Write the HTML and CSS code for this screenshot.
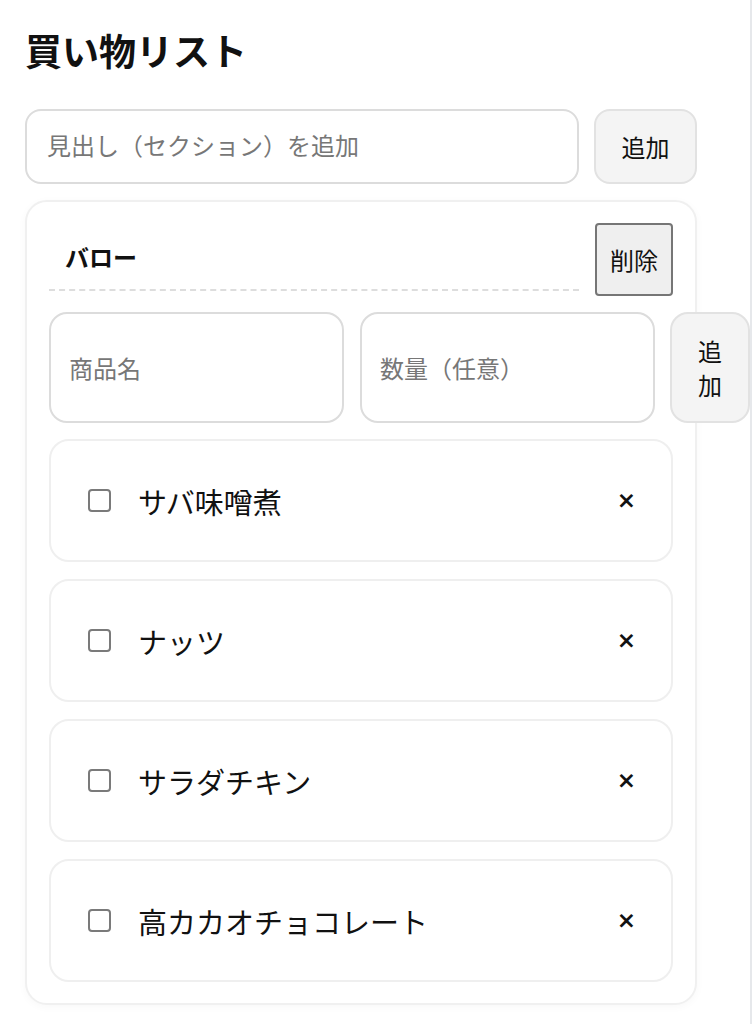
FILE: index.html
```html
<!DOCTYPE html>
<html lang="ja">
<head>
<meta charset="utf-8">
<title>買い物リスト</title>
<link rel="stylesheet" href="styles.css">
</head>
<body>
<div class="page">
  <h1 class="title">買い物リスト</h1>
  <div class="section-form">
    <input class="text-input section-input" type="text" placeholder="見出し（セクション）を追加">
    <button class="soft-btn section-add">追加</button>
  </div>
  <div class="card">
    <div class="card-head">
      <div class="card-label">バロー</div>
      <button class="del-btn">削除</button>
    </div>
    <div class="item-form">
      <input class="text-input item-input" type="text" placeholder="商品名">
      <input class="text-input item-input" type="text" placeholder="数量（任意）">
      <button class="soft-btn item-add">追加</button>
    </div>
    <ul class="items">
      <li class="item"><input class="check" type="checkbox"><span class="item-name">サバ味噌煮</span><button class="remove">×</button></li>
      <li class="item"><input class="check" type="checkbox"><span class="item-name">ナッツ</span><button class="remove">×</button></li>
      <li class="item"><input class="check" type="checkbox"><span class="item-name">サラダチキン</span><button class="remove">×</button></li>
      <li class="item"><input class="check" type="checkbox"><span class="item-name">高カカオチョコレート</span><button class="remove">×</button></li>
    </ul>
  </div>
</div>
</body>
</html>
```

FILE: styles.css
```css
* { box-sizing: border-box; }
html, body {
  margin: 0;
  padding: 0;
  background: #ffffff;
}
body {
  font-family: "Noto Sans CJK JP", "Noto Sans", sans-serif;
  color: #111;
}
.page {
  width: 752px;
  min-height: 1024px;
  padding: 25px 0 0 25px;
  border-right: 2px solid #e6e8eb;
  overflow: hidden;
}
.title {
  margin: 0;
  font-size: 37px;
  line-height: 51px;
  font-weight: 700;
  color: #111;
}
.section-form {
  margin-top: 33px;
  display: flex;
  gap: 15px;
  height: 75px;
}
.text-input {
  font-family: inherit;
  font-size: 24px;
  color: #111;
  border: 2px solid #dcdcdc;
  border-radius: 16px;
  background: #fff;
  outline: none;
}
.text-input::placeholder { color: #777; }
.section-input {
  width: 554px;
  height: 75px;
  padding: 0 20px 4px;
}
.soft-btn {
  font-family: inherit;
  font-size: 24px;
  color: #111;
  background: #f4f4f4;
  border: 2px solid #e2e2e2;
  border-radius: 16px;
  padding: 0;
}
.section-add {
  width: 103px;
  height: 75px;
}
.card {
  margin-top: 16px;
  width: 672px;
  border: 2px solid #f0f0f0;
  border-radius: 22px;
  padding: 21px 22px 21px 22px;
  box-shadow: 0 2px 8px rgba(0,0,0,0.03);
  background: #fff;
}
.card-head {
  display: flex;
  gap: 16px;
  height: 73px;
}
.card-label {
  flex: 1;
  display: flex;
  align-items: center;
  padding-left: 16px;
  font-size: 24px;
  font-weight: 700;
  border-bottom: 2px dashed #dddddd;
  margin-bottom: 5px;
}
.del-btn {
  width: 78px;
  height: 73px;
  font-family: inherit;
  font-size: 24px;
  color: #111;
  background: #efefef;
  border: 2px solid #767676;
  border-radius: 4px;
  padding: 0;
}
.item-form {
  margin-top: 16px;
  display: flex;
  gap: 15px;
  height: 111px;
}
.item-input {
  flex: none;
  width: 295px;
  height: 111px;
  padding: 0 18px;
  border-radius: 18px;
}
.item-input + .item-input { margin-left: 1px; }
.item-add {
  flex: none;
  width: 80px;
  height: 111px;
  padding: 0 20px;
  line-height: 34px;
  border-radius: 18px;
}
.items {
  list-style: none;
  margin: 16px 0 0;
  padding: 0;
  display: flex;
  flex-direction: column;
  gap: 17px;
}
.item {
  height: 123px;
  border: 2px solid #efefef;
  border-radius: 20px;
  display: flex;
  align-items: center;
  padding: 0 35px 0 37px;
}
.check {
  appearance: none;
  -webkit-appearance: none;
  width: 23px;
  height: 23px;
  margin: 0;
  border: 2px solid #7a7a7a;
  border-radius: 4px;
  background: #fff;
  flex: none;
}
.item-name {
  margin-left: 27px;
  font-size: 29px;
  flex: 1;
}
.remove {
  background: none;
  border: none;
  padding: 0;
  font-family: "DejaVu Sans", sans-serif;
  font-size: 23px;
  font-weight: 700;
  color: #111;
  line-height: 1;
}
```
